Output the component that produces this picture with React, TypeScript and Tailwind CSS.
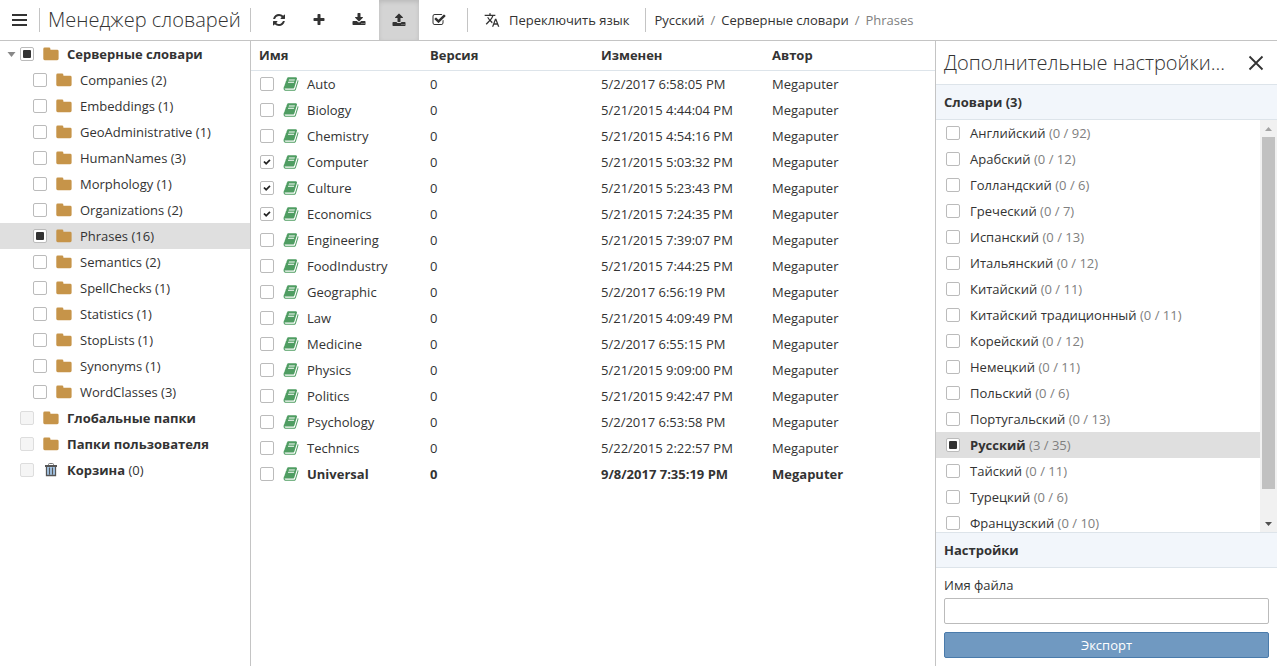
import { useEffect, useRef, useState } from "react";
import type { ReactNode } from "react";
import { MdTranslate } from "react-icons/md";
import clsx from "clsx";

type CheckState = "on" | "off" | "mixed";

const folders = [
  { name: "Companies", count: 2 },
  { name: "Embeddings", count: 1 },
  { name: "GeoAdministrative", count: 1 },
  { name: "HumanNames", count: 3 },
  { name: "Morphology", count: 1 },
  { name: "Organizations", count: 2 },
  { name: "Phrases", count: 16 },
  { name: "Semantics", count: 2 },
  { name: "SpellChecks", count: 1 },
  { name: "Statistics", count: 1 },
  { name: "StopLists", count: 1 },
  { name: "Synonyms", count: 1 },
  { name: "WordClasses", count: 3 },
];

const dictionaries = [
  { name: "Auto", modified: "5/2/2017 6:58:05 PM" },
  { name: "Biology", modified: "5/21/2015 4:44:04 PM" },
  { name: "Chemistry", modified: "5/21/2015 4:54:16 PM" },
  { name: "Computer", modified: "5/21/2015 5:03:32 PM" },
  { name: "Culture", modified: "5/21/2015 5:23:43 PM" },
  { name: "Economics", modified: "5/21/2015 7:24:35 PM" },
  { name: "Engineering", modified: "5/21/2015 7:39:07 PM" },
  { name: "FoodIndustry", modified: "5/21/2015 7:44:25 PM" },
  { name: "Geographic", modified: "5/2/2017 6:56:19 PM" },
  { name: "Law", modified: "5/21/2015 4:09:49 PM" },
  { name: "Medicine", modified: "5/2/2017 6:55:15 PM" },
  { name: "Physics", modified: "5/21/2015 9:09:00 PM" },
  { name: "Politics", modified: "5/21/2015 9:42:47 PM" },
  { name: "Psychology", modified: "5/2/2017 6:53:58 PM" },
  { name: "Technics", modified: "5/22/2015 2:22:57 PM" },
  { name: "Universal", modified: "9/8/2017 7:35:19 PM", bold: true },
];

const languages = [
  { name: "Английский", total: 92 },
  { name: "Арабский", total: 12 },
  { name: "Голландский", total: 6 },
  { name: "Греческий", total: 7 },
  { name: "Испанский", total: 13 },
  { name: "Итальянский", total: 12 },
  { name: "Китайский", total: 11 },
  { name: "Китайский традиционный", total: 11 },
  { name: "Корейский", total: 12 },
  { name: "Немецкий", total: 11 },
  { name: "Польский", total: 6 },
  { name: "Португальский", total: 13 },
  { name: "Русский", total: 35 },
  { name: "Тайский", total: 11 },
  { name: "Турецкий", total: 6 },
  { name: "Французский", total: 10 },
];

const icons = {
  refresh:
    "M1639 1056q0 5-1 7-64 268-268 434.5t-478 166.5q-146 0-282.5-55t-243.5-157l-129 129q-19 19-45 19t-45-19-19-45v-448q0-26 19-45t45-19h448q26 0 45 19t19 45-19 45l-137 137q71 66 161 102t187 36q134 0 250-65t186-179q11-17 53-117 8-23 30-23h192q13 0 22.5 9.5t9.5 22.500zm25-800v448q0 26-19 45t-45 19h-448q-26 0-45-19t-19-45 19-45l138-138q-148-137-349-137-134 0-250 65t-186 179q-11 17-53 117-8 23-30 23h-199q-13 0-22.5-9.5t-9.5-22.500v-7q65-268 270-434.5t480-166.5q146 0 284 55.5t245 156.5l130-129q19-19 45-19t45 19 19 45z",
  plus: "M1600 736v192q0 40-28 68t-68 28h-416v416q0 40-28 68t-68 28h-192q-40 0-68-28t-28-68v-416h-416q-40 0-68-28t-28-68v-192q0-40 28-68t68-28h416v-416q0-40 28-68t68-28h192q40 0 68 28t28 68v416h416q40 0 68 28t28 68z",
  download:
    "M1344 1344q0-26-19-45t-45-19-45 19-19 45 19 45 45 19 45-19 19-45zm256 0q0-26-19-45t-45-19-45 19-19 45 19 45 45 19 45-19 19-45zm128-224v320q0 40-28 68t-68 28h-1472q-40 0-68-28t-28-68v-320q0-40 28-68t68-28h465l135 136q58 56 136 56t136-56l136-136h464q40 0 68 28t28 68zm-325-569q17 41-14 70l-448 448q-18 19-45 19t-45-19l-448-448q-31-29-14-70 17-39 59-39h256v-448q0-26 19-45t45-19h256q26 0 45 19t19 45v448h256q42 0 59 39z",
  upload:
    "M1344 1472q0-26-19-45t-45-19-45 19-19 45 19 45 45 19 45-19 19-45zm256 0q0-26-19-45t-45-19-45 19-19 45 19 45 45 19 45-19 19-45zm128-224v320q0 40-28 68t-68 28h-1472q-40 0-68-28t-28-68v-320q0-40 28-68t68-28h427q21 56 70.5 92t110.5 36h256q61 0 110.5-36t70.5-92h427q40 0 68 28t28 68zm-325-648q-17 40-59 40h-256v448q0 26-19 45t-45 19h-256q-26 0-45-19t-19-45v-448h-256q-42 0-59-40-17-39 14-69l448-448q18-19 45-19t45 19l448 448q31 30 14 69z",
  checkSquare:
    "M1472 930v318q0 119-84.5 203.5t-203.5 84.5h-832q-119 0-203.5-84.5t-84.5-203.5v-832q0-119 84.5-203.5t203.5-84.5h832q63 0 117 25 15 7 18 23 3 17-9 29l-49 49q-10 10-23 10-3 0-9-2-23-6-45-6h-832q-66 0-113 47t-47 113v832q0 66 47 113t113 47h832q66 0 113-47t47-113v-254q0-13 9-22l64-64q10-10 23-10 6 0 12 3 20 8 20 29zm231-489l-814 814q-24 24-57 24t-57-24l-430-430q-24-24-24-57t24-57l110-110q24-24 57-24t57 24l263 263 647-647q24-24 57-24t57 24l110 110q24 24 24 57t-24 57z",
  check:
    "M1671 566q0 40-28 68l-724 724-136 136q-28 28-68 28t-68-28l-136-136-362-362q-28-28-28-68t28-68l136-136q28-28 68-28t68 28l294 295 656-657q28-28 68-28t68 28l136 136q28 28 28 68z",
  book: "M1703 478q40 57 18 129l-275 906q-19 64-76.5 107.5t-122.5 43.5h-923q-77 0-148.5-53.5t-99.5-131.5q-24-67-2-127 0-4 3-27t4-37q1-8-3-21.5t-3-19.5q2-11 8-21t16.5-23.5 16.5-23.5q23-38 45-91.5t30-91.5q3-10 .5-30t-.5-28q3-11 17-28t17-23q21-36 42-92t25-90q1-9-2.5-32t.5-28q4-13 22-30.5t22-22.5q19-26 42.5-84.5t27.5-96.5q1-8-3-25.5t-2-26.5q2-8 9-18t18-23 17-21q8-12 16.5-30.5t15-35 16-36 19.5-32 26.5-23.5 36-11.5 47.5 5.5l-1 3q38-9 51-9h761q74 0 114 56t18 130l-274 906q-36 119-71.5 153.5t-128.5 34.5h-869q-27 0-38 15-11 16-1 43 24 70 144 70h923q29 0 56-15.5t35-41.5l300-987q7-22 5-57 38 15 59 43zm-1064 2q-4 13 2 22.5t20 9.5h608q13 0 25.5-9.5t16.5-22.5l21-64q4-13-2-22.5t-20-9.5h-608q-13 0-25.5 9.5t-16.5 22.5zm-83 256q-4 13 2 22.5t20 9.5h608q13 0 25.5-9.5t16.5-22.5l21-64q4-13-2-22.5t-20-9.5h-608q-13 0-25.5 9.5t-16.5 22.5z",
};

function Icon({ name, className }: { name: keyof typeof icons; className?: string }) {
  return (
    <svg viewBox="0 0 1792 1792" fill="currentColor" aria-hidden="true" className={clsx("shrink-0", className)}>
      <path d={icons[name]} />
    </svg>
  );
}

function FolderIcon() {
  return (
    <svg viewBox="0 0 16 16" aria-hidden="true" className="size-4 shrink-0 text-[#c69449]" fill="currentColor">
      <path d="M.3 3A1.400 1.400 0 0 1 1.700 1.600H6A1.400 1.400 0 0 1 7.400 3v.8H14.200a1.400 1.400 0 0 1 1.400 1.400v7.600a1.400 1.400 0 0 1-1.400 1.400H1.700A1.400 1.400 0 0 1 .3 12.800z" />
    </svg>
  );
}

function TrashIcon() {
  return (
    <svg viewBox="0 0 16 16" aria-hidden="true" className="size-4 shrink-0" fill="none">
      <path d="M3.500 5h9v9h-9z" fill="#a9cdf0" />
      <path d="M5.500 3V2.500a1 1 0 0 1 1-1h3a1 1 0 0 1 1 1V3" stroke="#777" />
      <path d="M2 4h12" stroke="#555" strokeWidth="2" />
      <path d="M3.500 5v8.500h9V5M6.500 5.500v7M9.500 5.500v7" stroke="#555" strokeWidth="1.300" />
    </svg>
  );
}

function Checkbox({ id, state = "off", disabled }: { id: string; state?: CheckState; disabled?: boolean }) {
  const [value, setValue] = useState<CheckState>(state);
  const ref = useRef<HTMLInputElement>(null);

  useEffect(() => {
    if (ref.current) ref.current.indeterminate = value === "mixed";
  }, [value]);

  return (
    <span className="relative flex size-[14px] shrink-0 items-center justify-center">
      <input
        ref={ref}
        id={id}
        type="checkbox"
        disabled={disabled}
        checked={value === "on"}
        onChange={(e) => setValue(e.target.checked ? "on" : "off")}
        className="size-[14px] appearance-none rounded-xs border border-[#bbb] bg-white disabled:border-[#ddd] disabled:bg-[#f5f5f5]"
      />
      {value === "mixed" && <span className="pointer-events-none absolute size-2 rounded-[1px] bg-[#333]" />}
      {value === "on" && <Icon name="check" className="pointer-events-none absolute size-2 text-[#222]" />}
    </span>
  );
}

function Divider() {
  return <div className="h-6 w-px shrink-0 bg-[#c4c4c4]" />;
}

function ToolButton({ icon, title, active }: { icon: keyof typeof icons; title: string; active?: boolean }) {
  return (
    <button
      type="button"
      aria-label={title}
      className={clsx(
        "flex h-10 w-10 shrink-0 items-center justify-center",
        active ? "bg-[#d4d4d4] shadow-[inset_0_2px_4px_rgba(0,0,0,0.12)]" : "hover:bg-[#eee]"
      )}
    >
      <Icon name={icon} className="size-[14px]" />
    </button>
  );
}

function TreeRow({
  id,
  children,
  state,
  disabled,
  icon,
  nested,
  selected,
  expanded,
}: {
  id: string;
  children: ReactNode;
  state?: CheckState;
  disabled?: boolean;
  icon?: ReactNode;
  nested?: boolean;
  selected?: boolean;
  expanded?: boolean;
}) {
  return (
    <div className={clsx("flex h-[26px] items-center", nested ? "pl-[33px]" : "pl-5", selected && "bg-[#dfdfdf]")}>
      {expanded && (
        <button type="button" aria-label="Свернуть" className="-ml-[13px] mr-1 w-[9px]">
          <svg viewBox="0 0 9 5" className="h-[5px] w-[9px]" fill="#888">
            <path d="M.5 0h8L4.500 5z" />
          </svg>
        </button>
      )}
      <Checkbox id={id} state={state} disabled={disabled} />
      <label htmlFor={id} className="flex items-center gap-2 pl-[9px] whitespace-nowrap">
        {icon ?? <FolderIcon />}
        <span>{children}</span>
      </label>
    </div>
  );
}

function Sidebar() {
  return (
    <nav className="w-[251px] shrink-0 overflow-hidden border-r border-[#c4c4c4]">
      <ul>
        <li>
          <TreeRow id="server" state="mixed" expanded>
            <b>Серверные словари</b>
          </TreeRow>
          <ul>
            {folders.map((f) => (
              <li key={f.name}>
                <TreeRow
                  id={`folder-${f.name}`}
                  nested
                  state={f.name === "Phrases" ? "mixed" : "off"}
                  selected={f.name === "Phrases"}
                >
                  {f.name} ({f.count})
                </TreeRow>
              </li>
            ))}
          </ul>
        </li>
        <li>
          <TreeRow id="global" disabled>
            <b>Глобальные папки</b>
          </TreeRow>
        </li>
        <li>
          <TreeRow id="user" disabled>
            <b>Папки пользователя</b>
          </TreeRow>
        </li>
        <li>
          <TreeRow id="trash" disabled icon={<TrashIcon />}>
            <b>Корзина</b> (0)
          </TreeRow>
        </li>
      </ul>
    </nav>
  );
}

function DictionaryTable() {
  return (
    <main className="min-w-0 flex-1 overflow-hidden">
      <table className="w-full table-fixed border-separate border-spacing-0 text-left whitespace-nowrap">
        <thead>
          <tr>
            {["Имя", "Версия", "Изменен", "Автор"].map((title) => (
              <th key={title} className="h-[30px] border-b border-[#dde4ea] pb-[2px] pl-2">
                {title}
              </th>
            ))}
          </tr>
        </thead>
        <tbody>
          {dictionaries.map((d) => (
            <tr key={d.name} className={clsx("h-[26px]", d.bold && "font-bold")}>
              <td className="pl-[9px]">
                <div className="flex items-center">
                  <Checkbox
                    id={`dict-${d.name}`}
                    state={["Computer", "Culture", "Economics"].includes(d.name) ? "on" : "off"}
                  />
                  <label htmlFor={`dict-${d.name}`} className="flex items-center gap-2 pl-[9px]">
                    <Icon name="book" className="size-4 text-[#4f9d62]" />
                    {d.name}
                  </label>
                </div>
              </td>
              <td className="pl-2">0</td>
              <td className="pl-2">{d.modified}</td>
              <td className="pl-2">Megaputer</td>
            </tr>
          ))}
        </tbody>
      </table>
    </main>
  );
}

function ScrollTrack() {
  return (
    <div className="flex w-[17px] shrink-0 flex-col items-center bg-[#f1f1f1]" aria-hidden="true">
      <div className="flex h-[17px] shrink-0 items-center">
        <svg viewBox="0 0 7 4" className="h-1 w-[7px]" fill="#a3a3a3">
          <path d="M0 4h7L3.500 0z" />
        </svg>
      </div>
      <div className="min-h-0 w-full flex-1 px-[2px]">
        <div className="h-[93%] bg-[#c1c1c1]" />
      </div>
      <div className="flex h-[17px] shrink-0 items-center">
        <svg viewBox="0 0 7 4" className="h-1 w-[7px]" fill="#505050">
          <path d="M0 0h7L3.500 4z" />
        </svg>
      </div>
    </div>
  );
}

function SettingsPanel() {
  const [fileName, setFileName] = useState("");

  return (
    <aside className="flex w-[342px] shrink-0 flex-col border-l border-[#c4c4c4]">
      <div className="flex h-11 shrink-0 items-center justify-between border-b border-[#dde4ea] pr-[13px] pl-2">
        <h2 className="text-xl font-[350] whitespace-nowrap">Дополнительные настройки...</h2>
        <button type="button" aria-label="Закрыть">
          <svg viewBox="0 0 16 16" className="size-4" stroke="#333" strokeWidth="1.800" fill="none">
            <path d="M1.500 1.500l13 13M14.500 1.500l-13 13" />
          </svg>
        </button>
      </div>
      <h3 className="flex h-[35px] shrink-0 items-center border-b border-[#dde4ea] bg-[#f2f6fb] pl-2 font-bold">
        Словари (3)
      </h3>
      <div className="flex min-h-0 flex-1">
        <ul className="min-w-0 flex-1 overflow-hidden">
          {languages.map((lang) => {
            const current = lang.name === "Русский";
            return (
              <li key={lang.name} className={clsx("flex h-[26px] items-center pl-[10px]", current && "bg-[#dfdfdf]")}>
                <Checkbox id={`lang-${lang.name}`} state={current ? "mixed" : "off"} />
                <label htmlFor={`lang-${lang.name}`} className="pl-[10px]">
                  <span className={clsx(current && "font-bold")}>{lang.name}</span>{" "}
                  <span className="text-[#808080]">
                    ({current ? 3 : 0} / {lang.total})
                  </span>
                </label>
              </li>
            );
          })}
        </ul>
        <ScrollTrack />
      </div>
      <h3 className="flex h-9 shrink-0 items-center border-y border-[#dde4ea] bg-[#f2f6fb] pl-2 font-bold">
        Настройки
      </h3>
      <form className="flex shrink-0 flex-col px-2 pt-1 pb-2" onSubmit={(e) => e.preventDefault()}>
        <label htmlFor="file-name" className="leading-[26px]">
          Имя файла
        </label>
        <input
          id="file-name"
          type="text"
          value={fileName}
          onChange={(e) => setFileName(e.target.value)}
          className="h-[26px] w-full rounded-xs border border-[#bbb] px-2 outline-none"
        />
        <button type="submit" className="mt-2 h-[26px] w-full rounded-xs border border-[#4a7bab] bg-[#7099c1] text-white">
          Экспорт
        </button>
      </form>
    </aside>
  );
}

export default function App() {
  return (
    <div className="flex h-screen flex-col overflow-hidden bg-white font-['Open_Sans',sans-serif] text-[13px] leading-5 text-[#333]">
      <header className="flex h-[41px] shrink-0 items-center border-b border-[#c4c4c4] whitespace-nowrap">
        <button type="button" aria-label="Меню" className="flex h-10 w-[39px] shrink-0 items-center justify-center">
          <svg viewBox="0 0 15 12" className="h-3 w-[15px]" fill="#333">
            <path d="M0 0h15v2H0zM0 5h15v2H0zM0 10h15v2H0z" />
          </svg>
        </button>
        <Divider />
        <h1 className="w-[210px] shrink-0 pl-2 text-xl font-[350]">Менеджер словарей</h1>
        <Divider />
        <div className="flex px-2">
          <ToolButton icon="refresh" title="Обновить" />
          <ToolButton icon="plus" title="Добавить" />
          <ToolButton icon="download" title="Импорт" />
          <ToolButton icon="upload" title="Экспорт" active />
          <ToolButton icon="checkSquare" title="Выбрать" />
        </div>
        <Divider />
        <button type="button" className="flex h-10 items-center gap-[9px] px-4">
          <MdTranslate className="size-4" />
          Переключить язык
        </button>
        <Divider />
        <nav className="flex items-center gap-[6px] pl-2">
          <a href="#ru">Русский</a>
          <span className="text-[#808080]">/</span>
          <a href="#server">Серверные словари</a>
          <span className="text-[#808080]">/</span>
          <span className="text-[#808080]">Phrases</span>
        </nav>
      </header>
      <div className="flex min-h-0 flex-1">
        <Sidebar />
        <DictionaryTable />
        <SettingsPanel />
      </div>
    </div>
  );
}
